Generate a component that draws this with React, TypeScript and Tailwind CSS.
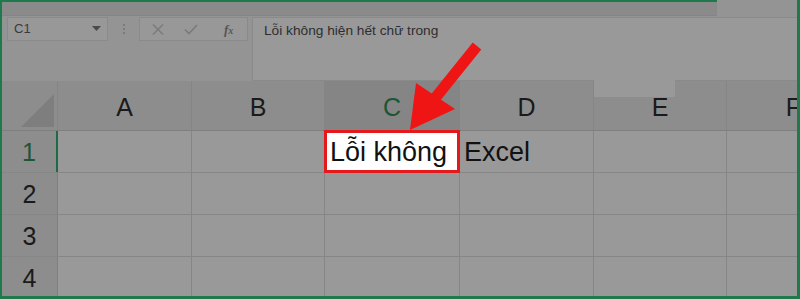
import React from "react";

const cols = ["A", "B", "C", "D", "E", "F"];
const colW = [134, 133, 135, 134, 133, 134];

export default function App() {
  return (
    <div className="w-[800px] h-[299px] overflow-hidden">
      <div className="relative w-[800px] h-[299px] bg-[#949494] border-l-2 border-r-[3px] border-b-[3px] border-[#1e7a4c] flex flex-col overflow-hidden font-['Liberation_Sans',sans-serif]">
        {/* top strip */}
        <div className="h-4 flex shrink-0">
          <div className="w-[715px] border-t-2 border-[#1e7a4c] bg-[#8a8a8a] border-b border-b-[#858585]" />
          <div className="flex-1" />
        </div>
        {/* formula bar */}
        <div className="h-[65px] shrink-0 flex items-start pt-[1px] pl-[5px]">
          <div className="w-[101px] h-[24px] bg-[#989898] border border-[#8a8a8a] flex items-center justify-between pl-[6px] pr-[6px] text-[13px] text-[#3a3a3a]">
            <span>C1</span>
            <svg width="9" height="6" viewBox="0 0 9 6"><path d="M0 0 L9 0 L4.5 5 Z" fill="#4a4a4a" /></svg>
          </div>
          <div className="w-[31px] h-[24px] flex items-center justify-center">
            <div className="flex flex-col gap-[2px]">
              <div className="w-[2px] h-[2px] bg-[#7a7a7a]" />
              <div className="w-[2px] h-[2px] bg-[#7a7a7a]" />
              <div className="w-[2px] h-[2px] bg-[#7a7a7a]" />
            </div>
          </div>
          <div className="w-[109px] h-[24px] bg-[#989898] border border-[#8a8a8a] flex items-center pl-[12px] gap-[20px]">
            <svg width="12" height="11" viewBox="0 0 12 11"><path d="M1 0.5 L11 10.5 M11 0.5 L1 10.5" stroke="#7a7a7a" strokeWidth="1.4" /></svg>
            <svg width="14" height="11" viewBox="0 0 14 11"><path d="M1 5.5 L5 9.5 L13 1" stroke="#7a7a7a" strokeWidth="1.6" fill="none" /></svg>
            <span className="ml-[6px] text-[13px] italic font-bold text-[#555] font-['Liberation_Serif',serif] leading-none">f<span className="text-[10px]">x</span></span>
          </div>
          <div className="ml-[4px] flex-1 h-[64px] bg-[#999999] border-l border-t border-b border-[#8a8a8a] pl-[11px] pt-[3px] text-[13.7px] text-[#2e2e2e]">
            Lỗi không hiện hết chữ trong
          </div>
        </div>
        {/* header row */}
        <div className="h-[50px] shrink-0 flex bg-[#8d8d8d] border-b border-[#7f7f7f]">
          <div className="w-[56px] shrink-0 border-r border-[#858585] flex items-end justify-end pr-[2px] pb-[3px]">
            <svg width="34" height="33" viewBox="0 0 34 33"><path d="M0 33 L33 33 L33 0 Z" fill="#7e7e7e" /></svg>
          </div>
          {cols.map((c, i) => (
            <div
              key={c}
              style={{ width: colW[i] }}
              className={`shrink-0 border-r border-[#858585] flex items-center justify-center pt-[4px] text-[25px] ${c === "C" ? "bg-[#858585] text-[#1d5535]" : "text-[#1a1a1a]"}`}
            >
              {c}
            </div>
          ))}
        </div>
        {/* rows */}
        {[1, 2, 3, 4].map((r) => (
          <div key={r} className="h-[42px] shrink-0 flex border-b border-[#868686]">
            <div className={`w-[56px] shrink-0 bg-[#8d8d8d] flex items-center justify-center pt-[2px] text-[25px] ${r === 1 ? "text-[#1d5535] border-r-2 border-[#1e6b43]" : "text-[#1a1a1a] border-r border-[#7f7f7f]"}`}>
              {r}
            </div>
            {cols.map((c, i) => (
              <div key={c} style={{ width: colW[i] }} className="shrink-0 border-r border-[#868686] bg-[#999999] relative">
                {r === 1 && c === "C" && (
                  <div className="absolute -left-[1px] -top-[1px] w-[136px] h-[43px] bg-white border-[3px] border-[#e3191b] flex items-center pl-[3px] pt-[1px] text-[27px] text-[#111] whitespace-nowrap">
                    Lỗi không
                  </div>
                )}
                {r === 1 && c === "D" && (
                  <div className="h-full flex items-center pl-[4px] pt-[1px] text-[27px] text-[#111]">Excel</div>
                )}
              </div>
            ))}
          </div>
        ))}
        {/* lighter tab artifact */}
        <div className="absolute left-[592px] top-[80px] w-[81px] h-[17px] bg-[#999999]" />
        {/* arrow annotation */}
        <svg className="absolute left-[-2px] top-0" width="800" height="299" viewBox="0 0 800 299">
          <line x1="477" y1="46" x2="432" y2="102" stroke="#ef1515" strokeWidth="11" />
          <polygon points="410,130 416,83 455,109" fill="#ef1515" />
        </svg>
      </div>
    </div>
  );
}
